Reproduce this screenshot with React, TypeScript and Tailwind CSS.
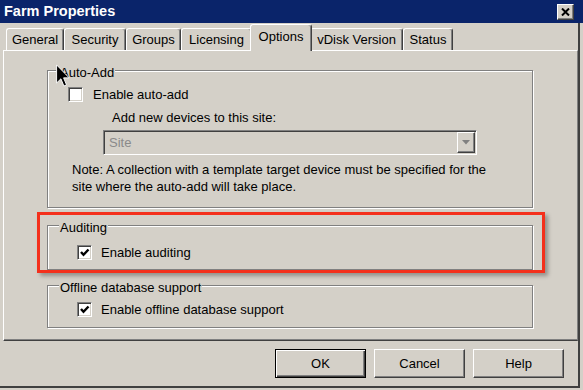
import React from 'react';

const tabs = [
  { label: 'General', cls: 'w-[58px]' },
  { label: 'Security', cls: 'w-[62px]' },
  { label: 'Groups', cls: 'w-[55px]' },
  { label: 'Licensing', cls: 'w-[71px]' },
  { label: 'Options', cls: 'w-[62px]', active: true },
  { label: 'vDisk Version', cls: 'w-[93px]' },
  { label: 'Status', cls: 'w-[50px]' },
];

const Tab = ({ label, cls, active }: { label: string; cls: string; active?: boolean }) =>
  active ? (
    <div
      className={`relative z-10 -mx-[2px] mb-[-1px] flex h-[27px] justify-center rounded-t-[3px] border-l border-t border-r border-white border-r-[#404040] bg-[#d4d0c8] pt-[4px] shadow-[inset_-1px_0_0_#808080] leading-[15px] ${cls}`}
    >
      {label}
    </div>
  ) : (
    <div
      className={`flex h-[22px] items-center justify-center rounded-t-[3px] border-l border-t border-r border-white border-r-[#404040] shadow-[inset_-1px_0_0_#808080] leading-[15px] ${cls}`}
    >
      {label}
    </div>
  );

const CheckBox = ({ checked }: { checked?: boolean }) => (
  <div className="flex h-[15px] w-[15px] shrink-0 items-center justify-center border border-t-[#808080] border-l-[#808080] border-b-white border-r-white bg-white shadow-[inset_1px_1px_0_#404040,inset_-1px_-1px_0_#d4d0c8]">
    {checked && (
      <svg width="11" height="11" viewBox="0 0 11 11">
        <polyline points="2,5 4.5,7.8 9.5,2.5" fill="none" stroke="#000" strokeWidth="2.4" />
      </svg>
    )}
  </div>
);

const GroupBox = ({ title, cls, children }: { title: string; cls: string; children: React.ReactNode }) => (
  <div
    className={`relative w-[486px] border border-[#808080] shadow-[1px_1px_0_#fff,inset_1px_1px_0_#fff] ${cls}`}
  >
    <span className="absolute left-[11px] top-[-6px] bg-[#d4d0c8] px-[1px] leading-[15px]">{title}</span>
    {children}
  </div>
);

const DlgButton = ({ label, isDefault }: { label: string; isDefault?: boolean }) => (
  <div
    className={
      isDefault
        ? 'flex h-[29px] w-[91px] items-center justify-center border border-black shadow-[inset_1px_1px_0_#fff,inset_-1px_-1px_0_#404040,inset_-2px_-2px_0_#808080]'
        : 'flex h-[29px] w-[91px] items-center justify-center border border-t-white border-l-white border-b-[#404040] border-r-[#404040] shadow-[inset_-1px_-1px_0_#808080]'
    }
  >
    {label}
  </div>
);

export default function App() {
  return (
    <div className="relative h-[390px] w-[583px] overflow-hidden bg-[#d4d0c8] font-['Liberation_Sans',Arial,sans-serif] text-[13px] text-black">
      {/* Title bar */}
      <div className="flex h-[23px] items-center justify-between bg-[#0a246a] pl-[4px] pr-[9px]">
        <span className="text-[14.5px] font-bold leading-none text-white">Farm Properties</span>
        <div className="flex h-[16px] w-[17px] items-center justify-center border border-t-white border-l-white border-b-[#404040] border-r-[#404040] bg-[#d4d0c8] shadow-[inset_-1px_-1px_0_#808080]">
          <svg width="9" height="8" viewBox="0 0 9 8">
            <path d="M1 0.5 L8 7.5 M8 0.5 L1 7.5" stroke="#000" strokeWidth="2" />
          </svg>
        </div>
      </div>

      <div className="h-[367px]">
        <div className="flex h-[365px] w-[580px] flex-col border-b-2 border-r-2 border-[#404040] pl-[3px]">
          {/* Tabs */}
          <div className="flex h-[27px] items-end pl-[3px]">
            {tabs.map((t) => (
              <Tab key={t.label} label={t.label} cls={t.cls} active={t.active} />
            ))}
          </div>

          {/* Tab page */}
          <div className="flex h-[291px] w-[575px] flex-col border-l border-t border-white border-b border-b-[#404040] border-r border-r-[#808080] pl-[43px] pt-[19px] shadow-[inset_0_-1px_0_#808080]">
            <GroupBox title="Auto-Add" cls="h-[138px] pt-[16px]">
              <div className="ml-[20px] flex h-[15px] items-center gap-[10px]">
                <CheckBox />
                <span className="leading-[15px]">Enable auto-add</span>
              </div>
              <div className="ml-[64px] mt-[8px] leading-[15px]">Add new devices to this site:</div>
              <div className="ml-[55px] mt-[5px] flex h-[25px] w-[374px] border border-t-[#808080] border-l-[#808080] border-b-white border-r-white p-[1px] shadow-[inset_1px_1px_0_#404040,inset_-1px_-1px_0_#d4d0c8]">
                <div className="flex flex-1 items-center pl-[4px] text-[#8a8a8a]">Site</div>
                <div className="flex w-[18px] items-center justify-center border border-t-white border-l-white border-b-[#404040] border-r-[#404040] shadow-[inset_-1px_-1px_0_#808080]">
                  <svg width="8" height="5" viewBox="0 0 8 5">
                    <path d="M0 0 H8 L4 4.5 Z" fill="#808080" />
                  </svg>
                </div>
              </div>
              <div className="ml-[24px] mt-[6px] whitespace-nowrap leading-[17px]">
                Note: A collection with a template target device must be specified for the
                <br />
                site where the auto-add will take place.
              </div>
            </GroupBox>

            <GroupBox title="Auditing" cls="mt-[17px] h-[45px] pt-[19px]">
              <div className="ml-[29px] flex h-[15px] items-center gap-[9px]">
                <CheckBox checked />
                <span className="leading-[15px]">Enable auditing</span>
              </div>
            </GroupBox>

            <GroupBox title="Offline database support" cls="mt-[15px] h-[43px] pt-[16px]">
              <div className="ml-[29px] flex h-[15px] items-center gap-[9px]">
                <CheckBox checked />
                <span className="leading-[15px]">Enable offline database support</span>
              </div>
            </GroupBox>
          </div>

          {/* Buttons */}
          <div className="flex justify-end gap-[8px] pr-[14px] pt-[8px]">
            <DlgButton label="OK" isDefault />
            <DlgButton label="Cancel" />
            <DlgButton label="Help" />
          </div>
        </div>
      </div>

      {/* Red annotation box */}
      <div className="absolute left-[37px] top-[212px] h-[61px] w-[508px] border-[3px] border-[#f4301c] shadow-[3px_3px_4px_rgba(0,0,0,0.3)]" />

      {/* Mouse pointer */}
      <svg className="absolute left-[56px] top-[64px]" width="14" height="24" viewBox="0 0 12 20">
        <path d="M0.5 0.5 V16 L4.2 12.4 L6.8 18.6 L9 17.6 L6.5 11.6 H11.3 Z" fill="#000" stroke="#fff" strokeWidth="0.8" />
      </svg>
    </div>
  );
}
